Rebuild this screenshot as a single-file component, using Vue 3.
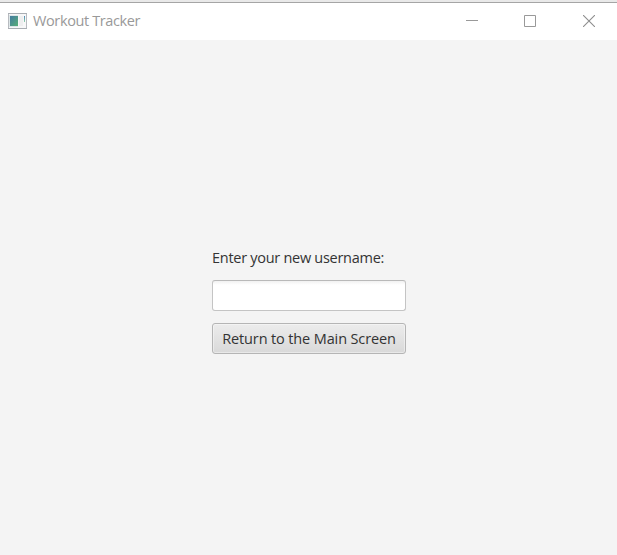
<script setup>
import { ref } from 'vue'

const username = ref('')
</script>

<template>
  <main class="window">
    <header class="titlebar">
      <svg class="app-icon" width="19" height="16" viewBox="0 0 19 16">
        <defs>
          <linearGradient id="pane" x1="0" y1="0" x2="1" y2="1">
            <stop offset="0" stop-color="#437ba0" />
            <stop offset="1" stop-color="#57ae78" />
          </linearGradient>
          <linearGradient id="strip" x1="0" y1="0" x2="0" y2="1">
            <stop offset="0" stop-color="#4f86b8" />
            <stop offset="1" stop-color="#8fd0a8" />
          </linearGradient>
        </defs>
        <rect x="0.5" y="0.5" width="18" height="15" fill="#f7f7f8" stroke="#b8bbc0" />
        <rect x="0" y="0" width="19" height="1" fill="#a9adb3" />
        <rect x="0" y="15" width="19" height="1" fill="#a9adb3" />
        <rect x="1" y="2" width="9" height="12" fill="#dde6e8" />
        <rect x="2" y="3" width="8" height="10" fill="url(#pane)" />
        <rect x="11" y="3" width="4" height="10" fill="#eeeeef" />
        <rect x="16" y="3" width="1" height="6" fill="url(#strip)" />
      </svg>
      <h1 class="title">Workout Tracker</h1>
      <div class="controls">
        <svg width="12" height="12" viewBox="0 0 12 12"><path d="M0 5.5H12" /></svg>
        <svg width="12" height="12" viewBox="0 0 12 12"><path d="M.5 .5H11.5V11.5H.5Z" /></svg>
        <svg class="close" width="12" height="12" viewBox="0 0 12 12"><path d="M0 0L12 12M12 0L0 12" /></svg>
      </div>
    </header>
    <section class="content">
      <form class="form" @submit.prevent>
        <label class="label" for="username">Enter your new username:</label>
        <input id="username" v-model="username" class="field" type="text" autocomplete="off" />
        <button class="button" type="button"><span class="caption">Return to the Main Screen</span></button>
      </form>
    </section>
  </main>
</template>

<style>
body {
  margin: 0;
}
</style>

<style scoped>
.window {
  box-sizing: border-box;
  display: flex;
  flex-direction: column;
  width: 617px;
  height: 555px;
  padding-top: 2px;
  overflow: hidden;
  background: linear-gradient(#e9e9e9 0 2px, #f4f4f4 2px);
  font-family: "Open Sans", "Noto Sans", sans-serif;
  font-size: 14.5px;
}

.titlebar {
  box-sizing: border-box;
  display: flex;
  flex: none;
  align-items: center;
  height: 38px;
  padding: 0 22px 1px 8px;
  border-top: 1px solid #a5a5a5;
  background: #fff;
}

.app-icon {
  flex: none;
  margin-right: 6px;
}

.title {
  margin: 0;
  color: #999;
  font-size: 14.5px;
  font-weight: 400;
  line-height: 20px;
  letter-spacing: -0.38px;
  white-space: nowrap;
}

.controls {
  display: flex;
  gap: 46px;
  margin-left: auto;
}

.controls svg {
  fill: none;
  stroke: #999;
  stroke-width: 1;
}

.controls .close {
  margin-left: 1px;
  stroke: #8e8e8e;
  stroke-width: 1.1;
}

.content {
  display: flex;
  flex: 1;
  justify-content: center;
  padding: 208px 0 0 1px;
}

.form {
  display: flex;
  flex-direction: column;
  width: 194px;
}

.label {
  height: 20px;
  margin-bottom: 12px;
  color: #333;
  line-height: 20px;
  letter-spacing: -0.28px;
  white-space: nowrap;
}

.field {
  box-sizing: border-box;
  width: 194px;
  height: 31px;
  margin: 0 0 12px;
  padding: 0 9px;
  border: 1px solid #c4c4c4;
  border-top-color: #b9b9b9;
  border-radius: 3px;
  outline: none;
  background: linear-gradient(#f1f1f1, #fff 4px);
  font: inherit;
}

.button {
  box-sizing: border-box;
  display: flex;
  align-items: center;
  justify-content: center;
  width: 194px;
  height: 31px;
  padding: 0;
  border: 1px solid #b5b5b5;
  border-radius: 3px;
  background: linear-gradient(#ececec, #d9d9d9);
  box-shadow: inset 0 0 0 1px rgba(255, 255, 255, 0.4);
  color: #333;
  font: inherit;
  line-height: 20px;
}

.caption {
  letter-spacing: -0.13px;
  white-space: nowrap;
}
</style>
